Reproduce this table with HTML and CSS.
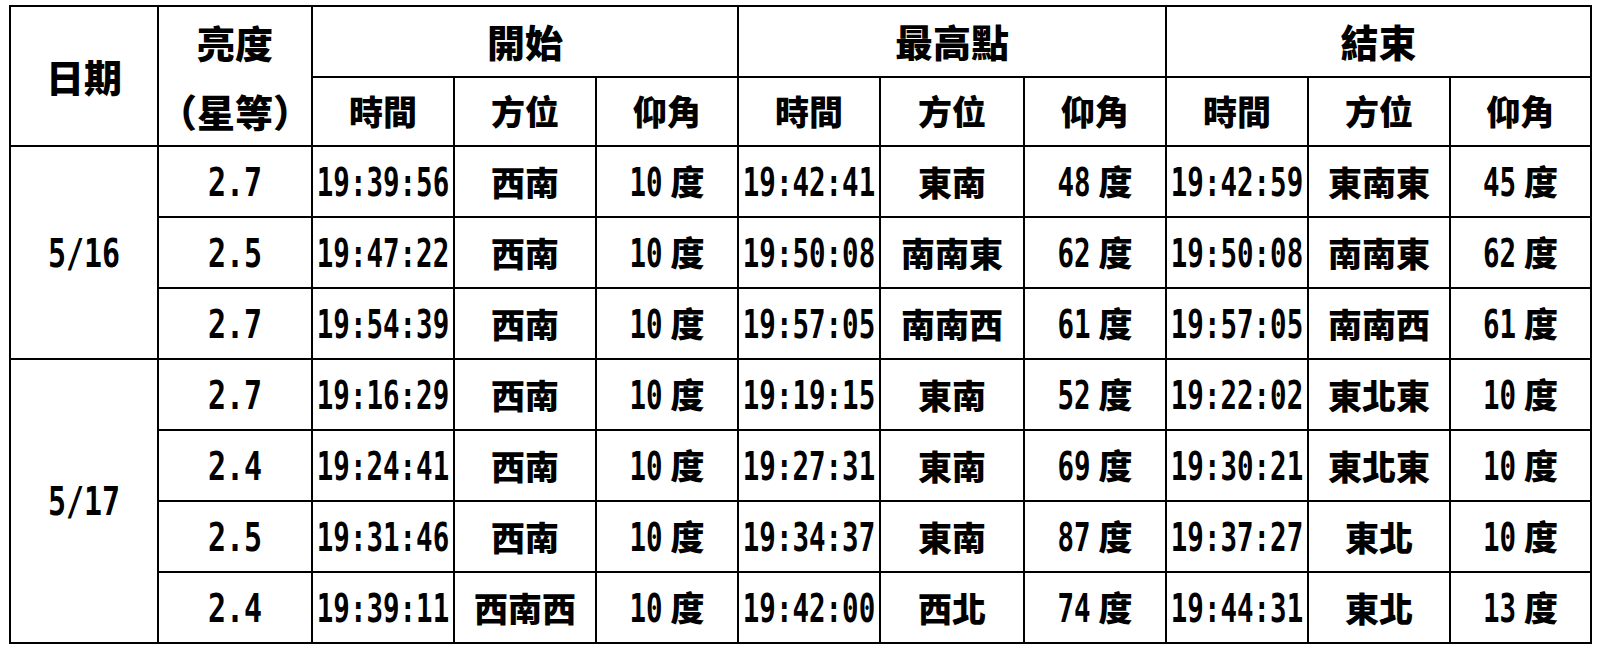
FILE: index.html
```html
<!DOCTYPE html>
<html lang="zh-Hant">
<head>
<meta charset="utf-8">
<title>觀測表</title>
<link rel="stylesheet" href="styles.css">
</head>
<body>
<table class="obs">
  <colgroup>
    <col class="c-date"><col class="c-mag">
    <col class="c-t"><col class="c-d"><col class="c-a">
    <col class="c-t"><col class="c-d2"><col class="c-a">
    <col class="c-t"><col class="c-d"><col class="c-a3">
  </colgroup>
  <thead>
    <tr class="h1">
      <th rowspan="2" class="big">日期</th>
      <th rowspan="2" class="big mag"><span class="l">亮度</span><span class="l">（星等）</span></th>
      <th colspan="3" class="big">開始</th>
      <th colspan="3" class="big">最高點</th>
      <th colspan="3" class="big">結束</th>
    </tr>
    <tr class="h2">
      <th>時間</th><th>方位</th><th>仰角</th>
      <th>時間</th><th>方位</th><th>仰角</th>
      <th>時間</th><th>方位</th><th>仰角</th>
    </tr>
  </thead>
  <tbody>
    <tr><td rowspan="3"><span class="d w">5/16</span></td><td><span class="d w">2.7</span></td><td><span class="d">19:39:56</span></td><td class="cjk">西南</td><td><span class="d">10</span> <span class="cjk">度</span></td><td><span class="d">19:42:41</span></td><td class="cjk">東南</td><td><span class="d">48</span> <span class="cjk">度</span></td><td><span class="d">19:42:59</span></td><td class="cjk">東南東</td><td><span class="d">45</span> <span class="cjk">度</span></td></tr>
    <tr><td><span class="d w">2.5</span></td><td><span class="d">19:47:22</span></td><td class="cjk">西南</td><td><span class="d">10</span> <span class="cjk">度</span></td><td><span class="d">19:50:08</span></td><td class="cjk">南南東</td><td><span class="d">62</span> <span class="cjk">度</span></td><td><span class="d">19:50:08</span></td><td class="cjk">南南東</td><td><span class="d">62</span> <span class="cjk">度</span></td></tr>
    <tr><td><span class="d w">2.7</span></td><td><span class="d">19:54:39</span></td><td class="cjk">西南</td><td><span class="d">10</span> <span class="cjk">度</span></td><td><span class="d">19:57:05</span></td><td class="cjk">南南西</td><td><span class="d">61</span> <span class="cjk">度</span></td><td><span class="d">19:57:05</span></td><td class="cjk">南南西</td><td><span class="d">61</span> <span class="cjk">度</span></td></tr>
    <tr><td rowspan="4"><span class="d w">5/17</span></td><td><span class="d w">2.7</span></td><td><span class="d">19:16:29</span></td><td class="cjk">西南</td><td><span class="d">10</span> <span class="cjk">度</span></td><td><span class="d">19:19:15</span></td><td class="cjk">東南</td><td><span class="d">52</span> <span class="cjk">度</span></td><td><span class="d">19:22:02</span></td><td class="cjk">東北東</td><td><span class="d">10</span> <span class="cjk">度</span></td></tr>
    <tr><td><span class="d w">2.4</span></td><td><span class="d">19:24:41</span></td><td class="cjk">西南</td><td><span class="d">10</span> <span class="cjk">度</span></td><td><span class="d">19:27:31</span></td><td class="cjk">東南</td><td><span class="d">69</span> <span class="cjk">度</span></td><td><span class="d">19:30:21</span></td><td class="cjk">東北東</td><td><span class="d">10</span> <span class="cjk">度</span></td></tr>
    <tr><td><span class="d w">2.5</span></td><td><span class="d">19:31:46</span></td><td class="cjk">西南</td><td><span class="d">10</span> <span class="cjk">度</span></td><td><span class="d">19:34:37</span></td><td class="cjk">東南</td><td><span class="d">87</span> <span class="cjk">度</span></td><td><span class="d">19:37:27</span></td><td class="cjk">東北</td><td><span class="d">10</span> <span class="cjk">度</span></td></tr>
    <tr><td><span class="d w">2.4</span></td><td><span class="d">19:39:11</span></td><td class="cjk">西南西</td><td><span class="d">10</span> <span class="cjk">度</span></td><td><span class="d">19:42:00</span></td><td class="cjk">西北</td><td><span class="d">74</span> <span class="cjk">度</span></td><td><span class="d">19:44:31</span></td><td class="cjk">東北</td><td><span class="d">13</span> <span class="cjk">度</span></td></tr>
  </tbody>
</table>
</body>
</html>
```

FILE: styles.css
```css
html, body {
  margin: 0;
  padding: 0;
  background: #ffffff;
}
body {
  padding: 5px 0 0 9px;
  color: #000;
  font-family: "Noto Sans CJK TC", "Noto Sans CJK SC", sans-serif;
}
.obs {
  border-collapse: collapse;
  table-layout: fixed;
  width: 1582px;
  border: 2px solid #000;
}
.c-date { width: 148px; }
.c-mag { width: 154px; }
.c-t { width: 142px; }
.c-d { width: 142px; }
.c-d2 { width: 144px; }
.c-a { width: 142px; }
.c-a3 { width: 141px; }

.obs th, .obs td {
  border: 2px solid #000;
  padding: 0;
  text-align: center;
  vertical-align: middle;
  white-space: nowrap;
  font-family: "Noto Sans CJK TC", "Noto Sans CJK SC", sans-serif;
  font-weight: 900;
  font-size: 34px;
  line-height: 1;
}
.obs th.big {
  font-size: 38px;
}
.h1 { height: 70px; }
.h2 { height: 69px; }
.obs tbody tr { height: 71px; }

.obs th.mag {
  vertical-align: top;
}
.mag .l {
  display: block;
  height: 69px;
  line-height: 69px;
}

.d {
  display: inline-block;
  font-family: "DejaVu Sans Mono", "Liberation Mono", monospace;
  font-weight: 700;
  font-size: 27.5px;
  line-height: 1;
  transform: scaleY(1.42);
  transform-origin: 50% 75%;
}
.d.w {
  font-size: 30px;
  transform: scaleY(1.32);
}
.cjk {
  font-family: "Noto Sans CJK TC", "Noto Sans CJK SC", sans-serif;
  font-weight: 900;
  font-size: 34px;
}
```
